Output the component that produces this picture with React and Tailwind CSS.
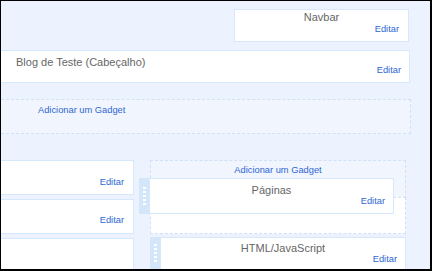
import React from "react";

function Handle({ top }) {
  return (
    <div className="w-[10px] shrink-0 bg-[#d3e6fa] flex flex-col items-center gap-[2px]" style={{ paddingTop: top }}>
      {[0, 1, 2, 3, 4].map((i) => (
        <div key={i} className="w-[3px] h-[2px] bg-white" />
      ))}
    </div>
  );
}

const link = "text-[9.3px] leading-[11px] text-[#2f66d2]";
const title = "text-[11px] leading-[13px] text-[#666666]";

export default function App() {
  return (
    <div className="w-[432px] h-[271px] overflow-hidden border-l border-t border-r-2 border-b-2 border-black bg-[#edf3fe] font-['Liberation_Sans',Arial,sans-serif]">
      {/* Navbar */}
      <div className="ml-[233px] mt-[8px] w-[175px] h-[33px] bg-white border border-[#d6e8fb] flex flex-col">
        <div className={`${title} text-center pt-[1px]`}>Navbar</div>
        <div className={`${link} text-right pr-[9px]`}>Editar</div>
      </div>

      {/* Header */}
      <div className="mt-[8px] w-[409px] h-[33px] bg-white border-y border-r border-[#d6e8fb] flex flex-col">
        <div className={`${title} pl-[15px] pt-[5px]`}>Blog de Teste (Cabeçalho)</div>
        <div className={`${link} text-right pr-[8px] mt-[-4px]`}>Editar</div>
      </div>

      {/* Add gadget (full width) */}
      <div className="mt-[16px] w-[410px] h-[35px] bg-[#f1f6fe] border-y border-r border-dashed border-[#cfe0f7] pl-[37px] pt-[5px]">
        <div className={link}>Adicionar um Gadget</div>
      </div>

      {/* Columns */}
      <div className="mt-[26px] flex items-start">
        {/* Left column */}
        <div className="w-[133px] flex flex-col gap-[4px]">
          <div className="h-[35px] bg-white border-y border-r border-[#d6e8fb] pt-[16px] pr-[9px]">
            <div className={`${link} text-right`}>Editar</div>
          </div>
          <div className="h-[35px] bg-white border-y border-r border-[#d6e8fb] pt-[15px] pr-[9px]">
            <div className={`${link} text-right`}>Editar</div>
          </div>
          <div className="h-[40px] bg-white border-t border-r border-[#d6e8fb]" />
        </div>

        {/* Right column */}
        <div className="ml-[16px] w-[256px] flex flex-col">
          <div className="relative h-[74px] border border-dashed border-[#cfe0f7] bg-[#f0f5fe] flex flex-col">
            <div className={`${link} text-center pt-[4px]`}>Adicionar um Gadget</div>
            <div className="mt-auto h-[37px] -mx-px -mb-px border border-dashed border-[#cfe0f7] bg-white" />
            {/* dragged widget */}
            <div className="absolute left-[-12px] top-[17px] w-[255px] h-[36px] flex">
              <Handle top={9} />
              <div className="flex-1 bg-white border border-[#d6e8fb] flex flex-col">
                <div className={`${title} text-center pt-[5px]`}>Páginas</div>
                <div className={`${link} text-right pr-[8px] mt-[-1px]`}>Editar</div>
              </div>
            </div>
          </div>
          <div className="mt-[3px] h-[40px] flex">
            <Handle top={7} />
            <div className="flex-1 bg-white border-t border-x border-[#d6e8fb] flex flex-col">
              <div className={`${title} text-center pt-[4px]`}>HTML/JavaScript</div>
              <div className={`${link} text-right pr-[8px] mt-[-1px]`}>Editar</div>
            </div>
          </div>
        </div>
      </div>
    </div>
  );
}
